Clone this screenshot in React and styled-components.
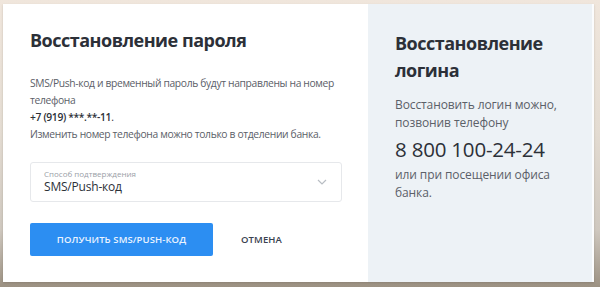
import React from "react";
import styled, { createGlobalStyle } from "styled-components";

const GlobalStyle = createGlobalStyle`
  html, body {
    margin: 0;
    padding: 0;
  }
  body {
    width: 600px;
    height: 287px;
    overflow: hidden;
    font-family: "Open Sans", "Noto Sans", sans-serif;
    background: linear-gradient(180deg, #f0e6dc 0%, #e4dcd2 45%, #cfc8bf 80%, #9c9182 100%);
  }
`;

const Page = styled.div`
  height: 287px;
  box-sizing: border-box;
  padding: 4px 6px 5px 3px;
`;

const Card = styled.div`
  display: grid;
  grid-template-columns: 365px 1fr;
  height: 100%;
  border-right: 2px solid #fbfcfd;
  box-shadow: 0 1px 2px rgba(60, 50, 40, 0.2);
`;

const Main = styled.section`
  background: #ffffff;
  padding: 24px 26px 0 27px;
`;

const Side = styled.aside`
  background: #edf2f6;
  padding: 26px 18px 0 27px;
`;

const Title = styled.h1`
  margin: 0;
  font-size: 18px;
  letter-spacing: -0.5px;
  line-height: ${(p) => (p.$small ? "27px" : "24px")};
  font-weight: 700;
  color: #2c3038;
`;

const Info = styled.div`
  margin-top: 23px;
  font-size: 10.3px;
  letter-spacing: -0.35px;
  line-height: 17px;
  color: #5b6068;
`;

const Phone = styled.div`
  font-weight: 600;
  color: #2c3038;
  line-height: 17px;
`;

const Select = styled.div`
  margin-top: 19px;
  height: 40px;
  box-sizing: border-box;
  border: 1px solid #e6e8eb;
  border-radius: 3px;
  display: flex;
  align-items: center;
  justify-content: space-between;
  padding: 0 14px 0 13px;
`;

const SelectText = styled.div`
  display: flex;
  flex-direction: column;
`;

const SelectLabel = styled.span`
  font-size: 8px;
  line-height: 10px;
  color: #9aa0a7;
`;

const SelectValue = styled.span`
  font-size: 12px;
  letter-spacing: -0.2px;
  line-height: 16px;
  color: #2c3038;
`;

const Actions = styled.div`
  margin-top: 21px;
  display: flex;
  align-items: center;
  gap: 28px;
`;

const Button = styled.button`
  font-family: inherit;
  border: none;
  cursor: pointer;
  white-space: nowrap;
  text-transform: uppercase;
  font-size: 9.5px;
  font-weight: 600;
  letter-spacing: 0.1px;
  height: 33px;
  border-radius: 2px;
  padding: 0;
  width: ${(p) => (p.$primary ? "183px" : "auto")};
  background: ${(p) => (p.$primary ? "#2c8ef2" : "transparent")};
  color: ${(p) => (p.$primary ? "#eaf3ff" : "#3a4250")};
`;

const SideText = styled.p`
  margin: 0;
  margin-top: ${(p) => p.$mt || "0"};
  font-size: 12px;
  letter-spacing: -0.1px;
  line-height: 18px;
  color: #5b6068;
`;

const BigPhone = styled.div`
  font-size: 20.5px;
  letter-spacing: -0.2px;
  line-height: 30px;
  color: #2c3038;
  margin: 2px 0;
`;

const Chevron = () => (
  <svg width="10" height="6" viewBox="0 0 10 6" fill="none">
    <path d="M1 1l4 4 4-4" stroke="#b8bdc3" strokeWidth="1.2" />
  </svg>
);

export default function App() {
  return (
    <>
      <GlobalStyle />
      <Page>
        <Card>
          <Main>
            <Title>Восстановление пароля</Title>
            <Info>
              SMS/Push-код и временный пароль будут направлены на номер телефона
              <Phone>
                +7 (919) ***.**-11<span style={{ fontWeight: 400 }}>.</span>
              </Phone>
              Изменить номер телефона можно только в отделении банка.
            </Info>
            <Select>
              <SelectText>
                <SelectLabel>Способ подтверждения</SelectLabel>
                <SelectValue>SMS/Push-код</SelectValue>
              </SelectText>
              <Chevron />
            </Select>
            <Actions>
              <Button $primary>Получить SMS/Push-код</Button>
              <Button>Отмена</Button>
            </Actions>
          </Main>
          <Side>
            <Title $small>Восстановление логина</Title>
            <SideText $mt="12px">
              Восстановить логин можно, позвонив телефону
            </SideText>
            <BigPhone>8 800 100-24-24</BigPhone>
            <SideText>или при посещении офиса банка.</SideText>
          </Side>
        </Card>
      </Page>
    </>
  );
}
